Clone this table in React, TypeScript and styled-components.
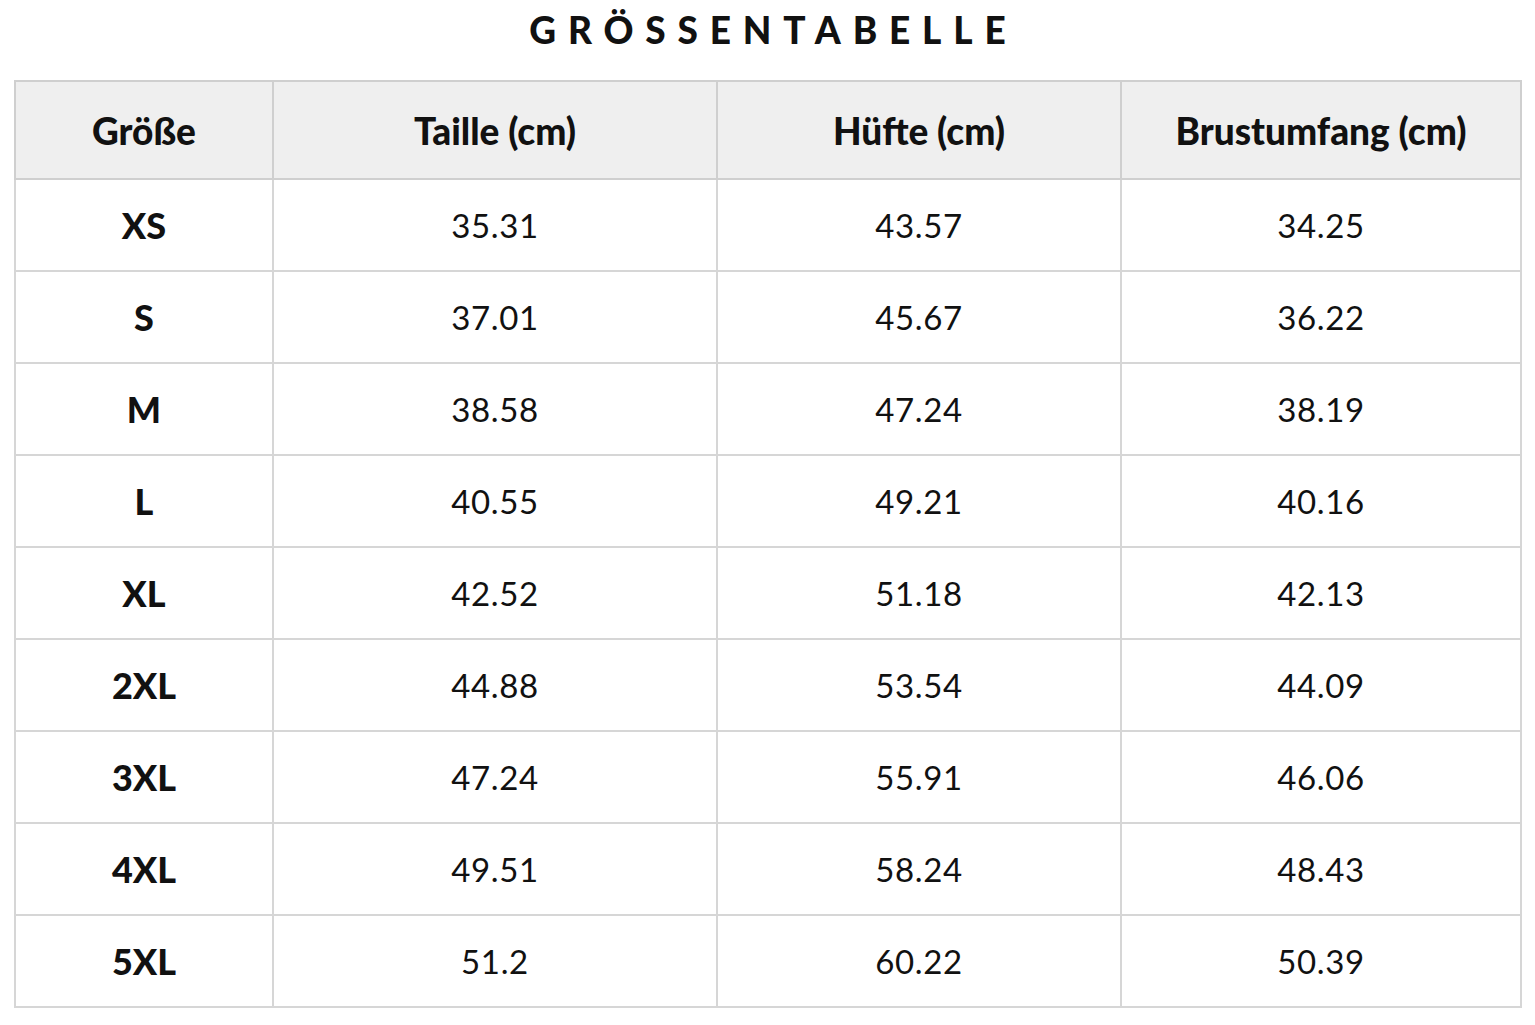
import styled, { createGlobalStyle } from "styled-components";

const GlobalStyle = createGlobalStyle`
    body {
        margin: 0;
        background: #ffffff;
        font-family: Lato, "Noto Sans", sans-serif;
        color: #111111;
    }
`

const Page = styled.div`
    padding: 0 14px;
`
const Title = styled.h1`
    margin: 0 0 22px 0;
    height: 58px;
    display: flex;
    align-items: center;
    justify-content: center;
    padding-left: 0.32em;
    font-size: 37px;
    font-weight: 900;
    letter-spacing: 0.32em;
    color: #111111;
`
const Table = styled.table`
    width: 1506px;
    border-collapse: collapse;
    table-layout: fixed;
    border: 2px solid #cfcfcf;
`
const HeadCell = styled.th`
    height: 96px;
    background: #efefef;
    border: 2px solid #cfcfcf;
    font-size: 37px;
    font-weight: 900;
    text-align: center;
    padding: 0;
`
const Cell = styled.td<{ $bold?: boolean }>`
    height: 90px;
    border: 2px solid #d6d6d6;
    text-align: center;
    padding: 0;
    font-size: ${p => p.$bold ? "36px" : "33px"};
    font-weight: ${p => p.$bold ? 900 : 400};
    letter-spacing: ${p => p.$bold ? "0" : "0.02em"};
`

const columns = [
    { label: "Größe", width: 258 },
    { label: "Taille (cm)", width: 444 },
    { label: "Hüfte (cm)", width: 404 },
    { label: "Brustumfang (cm)", width: 400 },
]

const rows = [
    ["XS", "35.31", "43.57", "34.25"],
    ["S", "37.01", "45.67", "36.22"],
    ["M", "38.58", "47.24", "38.19"],
    ["L", "40.55", "49.21", "40.16"],
    ["XL", "42.52", "51.18", "42.13"],
    ["2XL", "44.88", "53.54", "44.09"],
    ["3XL", "47.24", "55.91", "46.06"],
    ["4XL", "49.51", "58.24", "48.43"],
    ["5XL", "51.2", "60.22", "50.39"],
]

function App() {
    return (
        <Page>
            <GlobalStyle />
            <Title>GRÖSSENTABELLE</Title>
            <Table>
                <colgroup>
                    {columns.map(col => <col key={col.label} style={{ width: col.width }} />)}
                </colgroup>
                <thead>
                    <tr>
                        {columns.map(col => <HeadCell key={col.label}>{col.label}</HeadCell>)}
                    </tr>
                </thead>
                <tbody>
                    {rows.map(row => (
                        <tr key={row[0]}>
                            {row.map((value, i) => (
                                <Cell key={i} $bold={i === 0}>{value}</Cell>
                            ))}
                        </tr>
                    ))}
                </tbody>
            </Table>
        </Page>
    );
}

export default App;
